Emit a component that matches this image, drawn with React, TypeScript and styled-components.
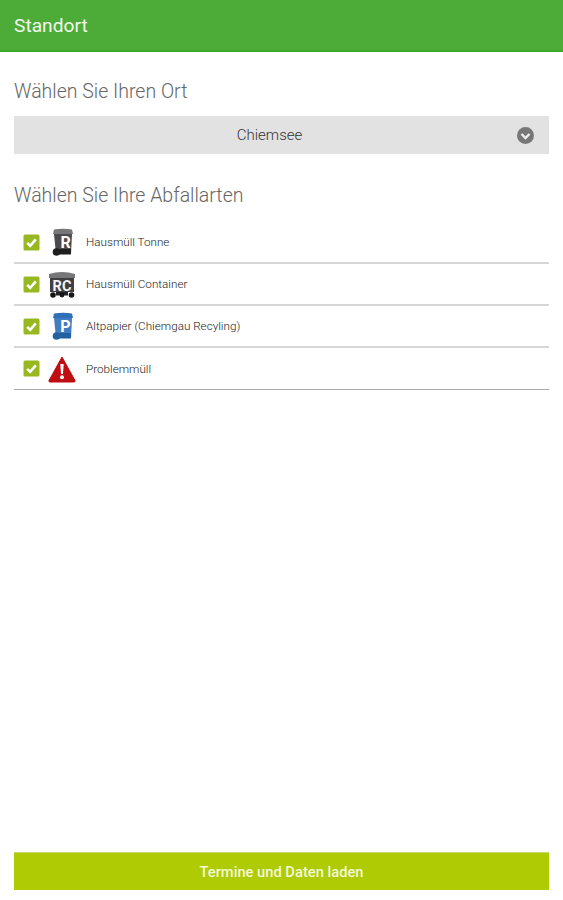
import React from "react";
import styled, { createGlobalStyle } from "styled-components";

const Global = createGlobalStyle`
  html, body { margin: 0; padding: 0; background: #fff; }
  body { font-family: Roboto, "Liberation Sans", sans-serif; }
`;

const Page = styled.div`
  height: 900px;
  display: flex;
  flex-direction: column;
  overflow: hidden;
`;

const Header = styled.header`
  height: 49px;
  flex: none;
  background: #4cac37;
  border-bottom: 2px solid #3ea62a;
  display: flex;
  align-items: center;
  padding: 1px 14px 0;
  color: #f2f9ef;
  font-size: 19.2px;
  font-weight: 400;
`;

const Content = styled.main`
  flex: 1;
  display: flex;
  flex-direction: column;
  padding: 0 14px 10px;
`;

const Heading = styled.h2<{ $top: number }>`
  margin: ${(p) => p.$top}px 0 0;
  height: 24px;
  line-height: 25px;
  font-size: 19.5px;
  font-weight: 300;
  color: #666;
`;

const Select = styled.div`
  margin-top: 13px;
  height: 38px;
  background: #e2e2e2;
  display: flex;
  align-items: center;
  justify-content: center;
  padding-right: 24px;
  position: relative;
  font-size: 15px;
  font-weight: 300;
  color: #333;
`;

const SelectIcon = styled.svg`
  position: absolute;
  right: 15px;
  top: 11px;
  width: 17px;
  height: 17px;
`;

const List = styled.div`
  margin-top: 15px;
  display: flex;
  flex-direction: column;
`;

const Row = styled.div<{ $last?: boolean }>`
  height: ${(p) => (p.$last ? 41 : 40)}px;
  display: flex;
  align-items: center;
  padding-left: 9px;
  border-bottom: ${(p) => (p.$last ? "1px solid #a9a9a9" : "2px solid #d6d6d6")};
`;

const Check = styled.svg`
  width: 17px;
  height: 17px;
  flex: none;
`;

const IconSlot = styled.div`
  width: 28px;
  height: 28px;
  margin-left: 8px;
  flex: none;
`;

const Label = styled.span`
  margin-left: 10px;
  font-size: 11.7px;
  font-weight: 300;
  color: #222;
`;

const LoadButton = styled.button`
  margin-top: auto;
  height: 38px;
  border: 0;
  border-top: 1px solid #c4db6a;
  background: #aecb04;
  color: #f3f8d8;
  font-family: Roboto, "Liberation Sans", sans-serif;
  font-size: 14.7px;
  font-weight: 500;
  padding: 0;
`;

const CheckBox = () => (
  <Check viewBox="0 0 17 17">
    <rect x="0.5" y="0.5" width="16" height="16" rx="1.5" fill="#97b821" />
    <path d="M4.2 8.8 L7.2 11.8 L12.8 5.4" fill="none" stroke="#fff" strokeWidth="2.6" />
  </Check>
);

const Bin = ({ lid, body, dark, letter }: { lid: string; body: string; dark: string; letter: string }) => (
  <svg width="28" height="28" viewBox="0 0 28 28">
    <path d="M6 1.5 Q15 0 24 1.5 L25 6 H5 Z" fill={lid} />
    <path d="M6 6 H24 L23 26 H8 Z" fill={body} />
    <path d="M11 21 H23 L22.8 26.5 H11 Z" fill={dark} />
    <circle cx="8.5" cy="24" r="3.8" fill={dark} />
    <text x="17.5" y="20" textAnchor="middle" fontFamily="Roboto, sans-serif" fontSize="16" fontWeight="700" fill="#fff">
      {letter}
    </text>
  </svg>
);

const Container = () => (
  <svg width="28" height="28" viewBox="0 0 28 28">
    <path d="M1 4 Q14 0 27 4 V8 H1 Z" fill="#77777a" />
    <rect x="2" y="8" width="24" height="14" fill="#3f3f41" />
    <text x="14" y="20.5" textAnchor="middle" fontFamily="Roboto, sans-serif" fontSize="14.5" fontWeight="700" fill="#f4f4f4">
      RC
    </text>
    <rect x="8" y="22" width="12" height="3.5" fill="#222" />
    <circle cx="5" cy="25" r="2.8" fill="#161616" />
    <circle cx="14" cy="25" r="2.4" fill="#161616" />
    <circle cx="23.5" cy="25" r="2.8" fill="#161616" />
  </svg>
);

const Warning = () => (
  <svg width="28" height="28" viewBox="0 0 28 28">
    <path d="M14 2 L27 25.5 Q27.5 27 26 27 H2 Q0.5 27 1 25.5 Z" fill="#bf0d12" stroke="#bf0d12" strokeLinejoin="round" />
    <path d="M12.3 9 H15.7 L15 19 H13 Z" fill="#fff" />
    <circle cx="14" cy="22.3" r="2" fill="#fff" />
  </svg>
);

const rows = [
  { label: "Hausmüll Tonne", icon: <Bin lid="#77777a" body="#4a4a4c" dark="#1e1e1e" letter="R" /> },
  { label: "Hausmüll Container", icon: <Container /> },
  { label: "Altpapier (Chiemgau Recyling)", icon: <Bin lid="#2f6fb5" body="#3f7cc0" dark="#23609f" letter="P" /> },
  { label: "Problemmüll", icon: <Warning /> },
];

export default function App() {
  return (
    <Page>
      <Global />
      <Header>Standort</Header>
      <Content>
        <Heading $top={27}>Wählen Sie Ihren Ort</Heading>
        <Select>
          Chiemsee
          <SelectIcon viewBox="0 0 17 17">
            <circle cx="8.5" cy="8.5" r="8.5" fill="#777" />
            <path d="M4.5 7 L8.5 11 L12.5 7" fill="none" stroke="#eee" strokeWidth="2.4" />
          </SelectIcon>
        </Select>
        <Heading $top={29}>Wählen Sie Ihre Abfallarten</Heading>
        <List>
          {rows.map((r, i) => (
            <Row key={r.label} $last={i === rows.length - 1}>
              <CheckBox />
              <IconSlot>{r.icon}</IconSlot>
              <Label>{r.label}</Label>
            </Row>
          ))}
        </List>
        <LoadButton>Termine und Daten laden</LoadButton>
      </Content>
    </Page>
  );
}
